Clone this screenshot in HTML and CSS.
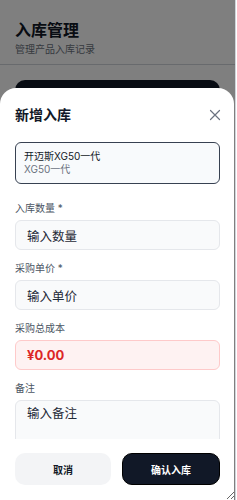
FILE: index.html
```html
<!DOCTYPE html>
<html lang="zh-CN">
<head>
  <meta charset="UTF-8" />
  <title>入库管理</title>
  <meta name="viewport" content="width=device-width, initial-scale=1.0" />
  <link rel="stylesheet" href="styles.css">
</head>
<body>
  <div class="frame">
    <div class="page-head">
      <div class="page-title">入库管理</div>
      <div class="page-sub">管理产品入库记录</div>
    </div>
    <div class="page-body">
      <button class="add-btn">新增入库</button>
    </div>

    <div class="overlay"></div>

    <div class="sheet">
      <div class="sheet-head">
        <div class="sheet-title">新增入库</div>
        <svg class="close" width="12" height="12" viewBox="0 0 12 12">
          <path d="M1.5 1.5 L10.5 10.5 M10.5 1.5 L1.5 10.5" stroke="#6b7280" stroke-width="1.2" fill="none" stroke-linecap="round"/>
        </svg>
      </div>

      <div class="sheet-body">
        <div class="product">
          <div class="product-name">开迈斯XG50一代</div>
          <div class="product-model">XG50一代</div>
        </div>

        <div class="field">
          <div class="label">入库数量 *</div>
          <div class="input">输入数量</div>
        </div>

        <div class="field">
          <div class="label">采购单价 *</div>
          <div class="input">输入单价</div>
        </div>

        <div class="field">
          <div class="label">采购总成本</div>
          <div class="input total">¥0.00</div>
        </div>

        <div class="field">
          <div class="label">备注</div>
          <div class="input note">输入备注</div>
        </div>
      </div>

      <div class="sheet-foot">
        <button class="btn cancel">取消</button>
        <button class="btn confirm">确认入库</button>
      </div>
    </div>
  </div>
</body>
</html>
```

FILE: styles.css
```css
* {
  box-sizing: border-box;
}

body {
  margin: 0;
  background: white;
  font-family: Inter, "Noto Sans CJK SC", sans-serif;
  color: #111827;
}

.frame {
  position: relative;
  width: 236px;
  height: 500px;
  overflow: hidden;
  border-right: 1px solid #d1d5db;
  resize: both;
  background: #ffffff;
}

.page-head {
  padding: 19px 15px 0;
  height: 65px;
  border-bottom: 1px solid #d1d5db;
}

.page-title {
  font-size: 16px;
  font-weight: bold;
  line-height: 22px;
}

.page-sub {
  font-size: 10px;
  line-height: 14px;
  margin-top: 1px;
  color: #6b7280;
}

.page-body {
  padding: 15px 15px;
}

.add-btn {
  width: 100%;
  height: 38px;
  border: none;
  border-radius: 10px;
  background: #111827;
}

.overlay {
  position: absolute;
  inset: 0;
  background: rgba(0, 0, 0, 0.5);
}

.sheet {
  position: absolute;
  left: 0;
  right: 1px;
  top: 88px;
  bottom: 0;
  background: white;
  border-radius: 16px 16px 0 0;
  display: flex;
  flex-direction: column;
}

.sheet-head {
  display: flex;
  align-items: center;
  justify-content: space-between;
  height: 54px;
  padding: 0 13px 0 15px;
}

.sheet-title {
  font-size: 14px;
  font-weight: bold;
  line-height: 20px;
}

.sheet-body {
  flex: 1;
  overflow: hidden;
  padding: 0 14px 0 15px;
}

.product {
  background: #f8fafc;
  border: 1.5px solid #374151;
  border-radius: 6px;
  padding: 7px 8px;
  margin-bottom: 17px;
}

.product-name {
  font-size: 10px;
  line-height: 13px;
  color: #111827;
}

.product-model {
  font-size: 10px;
  line-height: 13px;
  color: #6b7280;
}

.field {
  margin-bottom: 11px;
}

.label {
  font-size: 10px;
  line-height: 14px;
  color: #4b5563;
  margin-bottom: 5px;
}

.input {
  height: 30px;
  background: #f9fafb;
  border: 1px solid #e5e7eb;
  border-radius: 6px;
  padding: 0 11px;
  display: flex;
  align-items: center;
  font-size: 12.5px;
  color: #1f2937;
}

.input.total {
  background: #fef2f2;
  border-color: #fecaca;
  color: #dc2626;
  font-weight: bold;
  font-size: 13px;
}

.input.note {
  height: 60px;
  align-items: flex-start;
  padding-top: 2px;
}

.sheet-foot {
  display: flex;
  gap: 11px;
  padding: 14px 14px 15px 15px;
  background: white;
}

.btn {
  flex: 1;
  height: 32px;
  border-radius: 10px;
  font-family: Inter, "Noto Sans CJK SC", sans-serif;
  font-size: 10px;
  font-weight: bold;
  border: none;
}

.cancel {
  background: #f3f4f6;
  color: #111827;
}

.confirm {
  background: #111827;
  color: white;
  border: 1px solid #000;
}
```
